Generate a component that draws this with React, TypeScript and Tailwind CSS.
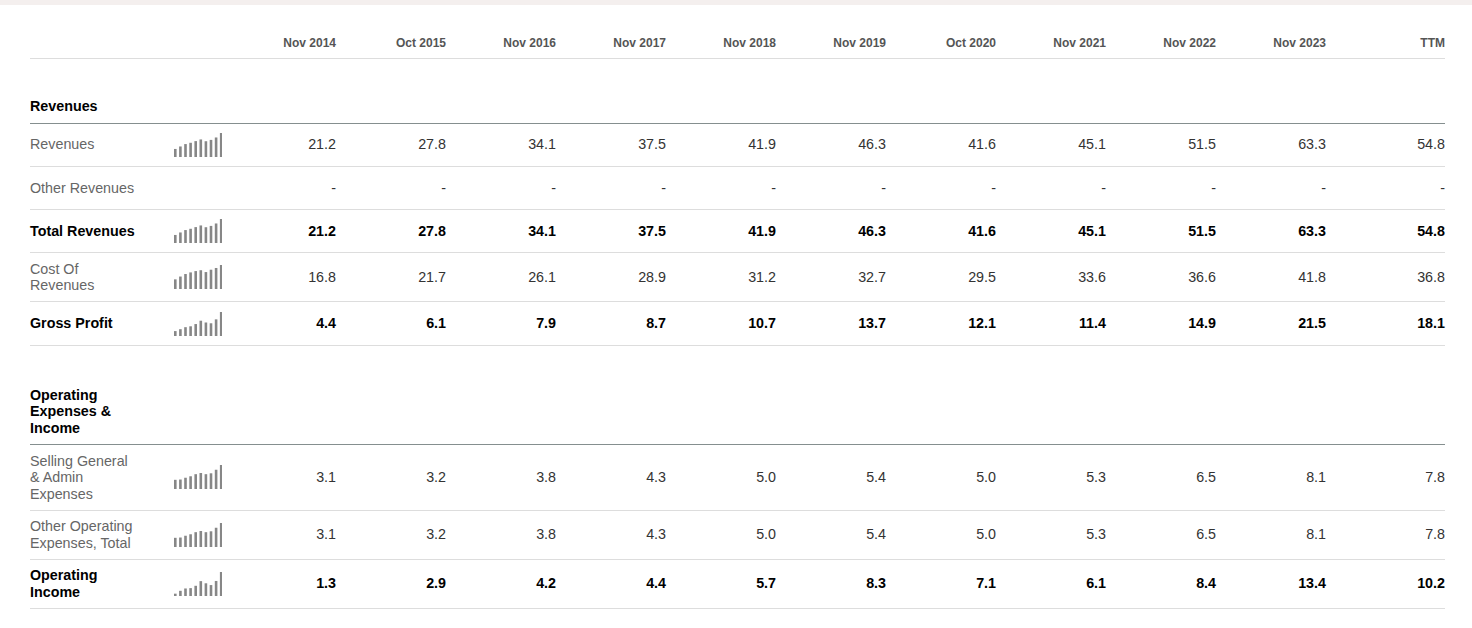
import React from 'react';

const periods = ['Nov 2014', 'Oct 2015', 'Nov 2016', 'Nov 2017', 'Nov 2018', 'Nov 2019', 'Oct 2020', 'Nov 2021', 'Nov 2022', 'Nov 2023', 'TTM'];

type Row = { label: string; values: (number | null)[]; bold?: boolean };
type Section = { title: string; rows: Row[]; topPad: string };

const sections: Section[] = [
  {
    title: 'Revenues',
    topPad: 'pt-[39px]',
    rows: [
      { label: 'Revenues', values: [21.2, 27.8, 34.1, 37.5, 41.9, 46.3, 41.6, 45.1, 51.5, 63.3, 54.8] },
      { label: 'Other Revenues', values: [null, null, null, null, null, null, null, null, null, null, null] },
      { label: 'Total Revenues', bold: true, values: [21.2, 27.8, 34.1, 37.5, 41.9, 46.3, 41.6, 45.1, 51.5, 63.3, 54.8] },
      { label: 'Cost Of Revenues', values: [16.8, 21.7, 26.1, 28.9, 31.2, 32.7, 29.5, 33.6, 36.6, 41.8, 36.8] },
      { label: 'Gross Profit', bold: true, values: [4.4, 6.1, 7.9, 8.7, 10.7, 13.7, 12.1, 11.4, 14.9, 21.5, 18.1] },
    ],
  },
  {
    title: 'Operating Expenses & Income',
    topPad: 'pt-[41px]',
    rows: [
      { label: 'Selling General & Admin Expenses', values: [3.1, 3.2, 3.8, 4.3, 5.0, 5.4, 5.0, 5.3, 6.5, 8.1, 7.8] },
      { label: 'Other Operating Expenses, Total', values: [3.1, 3.2, 3.8, 4.3, 5.0, 5.4, 5.0, 5.3, 6.5, 8.1, 7.8] },
      { label: 'Operating Income', bold: true, values: [1.3, 2.9, 4.2, 4.4, 5.7, 8.3, 7.1, 6.1, 8.4, 13.4, 10.2] },
    ],
  },
];

const grid = 'grid grid-cols-[130px_66px_repeat(10,110px)_1fr]';

const Sparkline = ({ values }: { values: (number | null)[] }) => {
  const data = values.slice(0, 10).map((v) => v ?? 0);
  const max = Math.max(...data);
  if (!max) return null;
  return (
    <svg width="48" height="24" viewBox="0 0 48 24">
      {data.map((v, i) => {
        const h = Math.max(2, (v / max) * 24);
        return <rect key={i} x={i * 5.1} y={24 - h} width="2.6" height={h} fill="#878787" />;
      })}
    </svg>
  );
};

export default function App() {
  return (
    <div className="min-h-[628px] bg-white font-['Liberation_Sans',Arial,sans-serif]">
      <div className="h-[5px] bg-[#f4efee]" />
      <div className="px-[30px]">
        <div className="w-[1415px]">
          <div className={`${grid} border-b border-[#dddddd] pt-[31px] pb-[8px] text-[12px] leading-[14px] font-bold text-[#555555]`}>
            <div />
            <div />
            {periods.map((p) => (
              <div key={p} className="text-right">{p}</div>
            ))}
          </div>

          {sections.map((s) => (
            <div key={s.title}>
              <div className={`${grid} border-b border-[#858f8f] ${s.topPad} pb-[8px]`}>
                <div className="pr-[22px] text-[14.3px] leading-[16.5px] font-bold text-black">{s.title}</div>
              </div>
              {s.rows.map((r) => (
                <div
                  key={r.label}
                  className={`${grid} items-center border-b border-[#dddddd] min-h-[43.3px] py-[7.5px] text-[14.3px] leading-[16.5px]`}
                >
                  <div className={`pr-[22px] ${r.bold ? 'font-bold text-black' : 'text-[#666666]'}`}>{r.label}</div>
                  <div className="pl-[14px] flex items-center">
                    <Sparkline values={r.values} />
                  </div>
                  {r.values.map((v, i) => (
                    <div key={i} className={`text-right ${r.bold ? 'font-bold text-black' : 'text-[#333333]'}`}>
                      {v === null ? '-' : v.toFixed(1)}
                    </div>
                  ))}
                </div>
              ))}
            </div>
          ))}
        </div>
      </div>
    </div>
  );
}
